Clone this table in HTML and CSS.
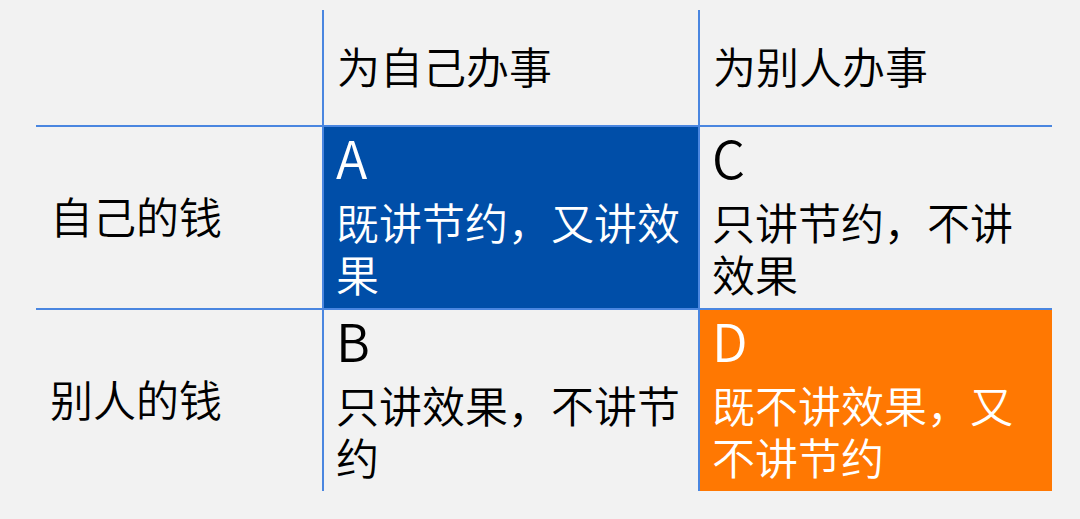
FILE: index.html
```html
<!DOCTYPE html>
<html lang="zh-CN">
<head>
<meta charset="utf-8">
<title>四种花钱方式</title>
<link rel="stylesheet" href="styles.css">
</head>
<body>
<div class="matrix">
  <div class="cell corner"></div>
  <div class="cell head col">为自己办事</div>
  <div class="cell head col">为别人办事</div>

  <div class="cell label row">自己的钱</div>
  <div class="cell quad row col blue">
    <div class="letter">A</div>
    <div class="desc">既讲节约，又讲效果</div>
  </div>
  <div class="cell quad row col">
    <div class="letter">C</div>
    <div class="desc">只讲节约，不讲效果</div>
  </div>

  <div class="cell label row">别人的钱</div>
  <div class="cell quad row col">
    <div class="letter">B</div>
    <div class="desc">只讲效果，不讲节约</div>
  </div>
  <div class="cell quad row col orange">
    <div class="letter">D</div>
    <div class="desc">既不讲效果，又不讲节约</div>
  </div>
</div>
</body>
</html>
```

FILE: styles.css
```css
html, body {
  margin: 0;
  padding: 0;
  background: #f2f2f2;
}

body {
  width: 1080px;
  height: 519px;
  overflow: hidden;
  font-family: "Noto Sans CJK SC", "Noto Sans", sans-serif;
  font-weight: 350;
  color: #000;
}

.matrix {
  display: grid;
  grid-template-columns: 286px 376px 354px;
  grid-template-rows: 115px 183px 183px;
  margin: 10px 0 0 36px;
  width: 1016px;
}

.cell {
  box-sizing: border-box;
  font-size: 43px;
  line-height: 52px;
}

.col {
  border-left: 2px solid #4a86e0;
}

.row {
  border-top: 2px solid #4a86e0;
}

.head {
  display: flex;
  align-items: center;
  padding-left: 13px;
  padding-bottom: 6px;
}

.label {
  display: flex;
  align-items: center;
  padding-left: 14px;
  padding-bottom: 6px;
}

.quad {
  padding: 0 8px 0 12px;
}

.letter {
  font-size: 52px;
  line-height: 60px;
}

.desc {
  margin-top: 8px;
}

.blue {
  background: #004ea8;
  color: #fff;
}

.orange {
  background: #ff7802;
  color: #fff;
}
```
